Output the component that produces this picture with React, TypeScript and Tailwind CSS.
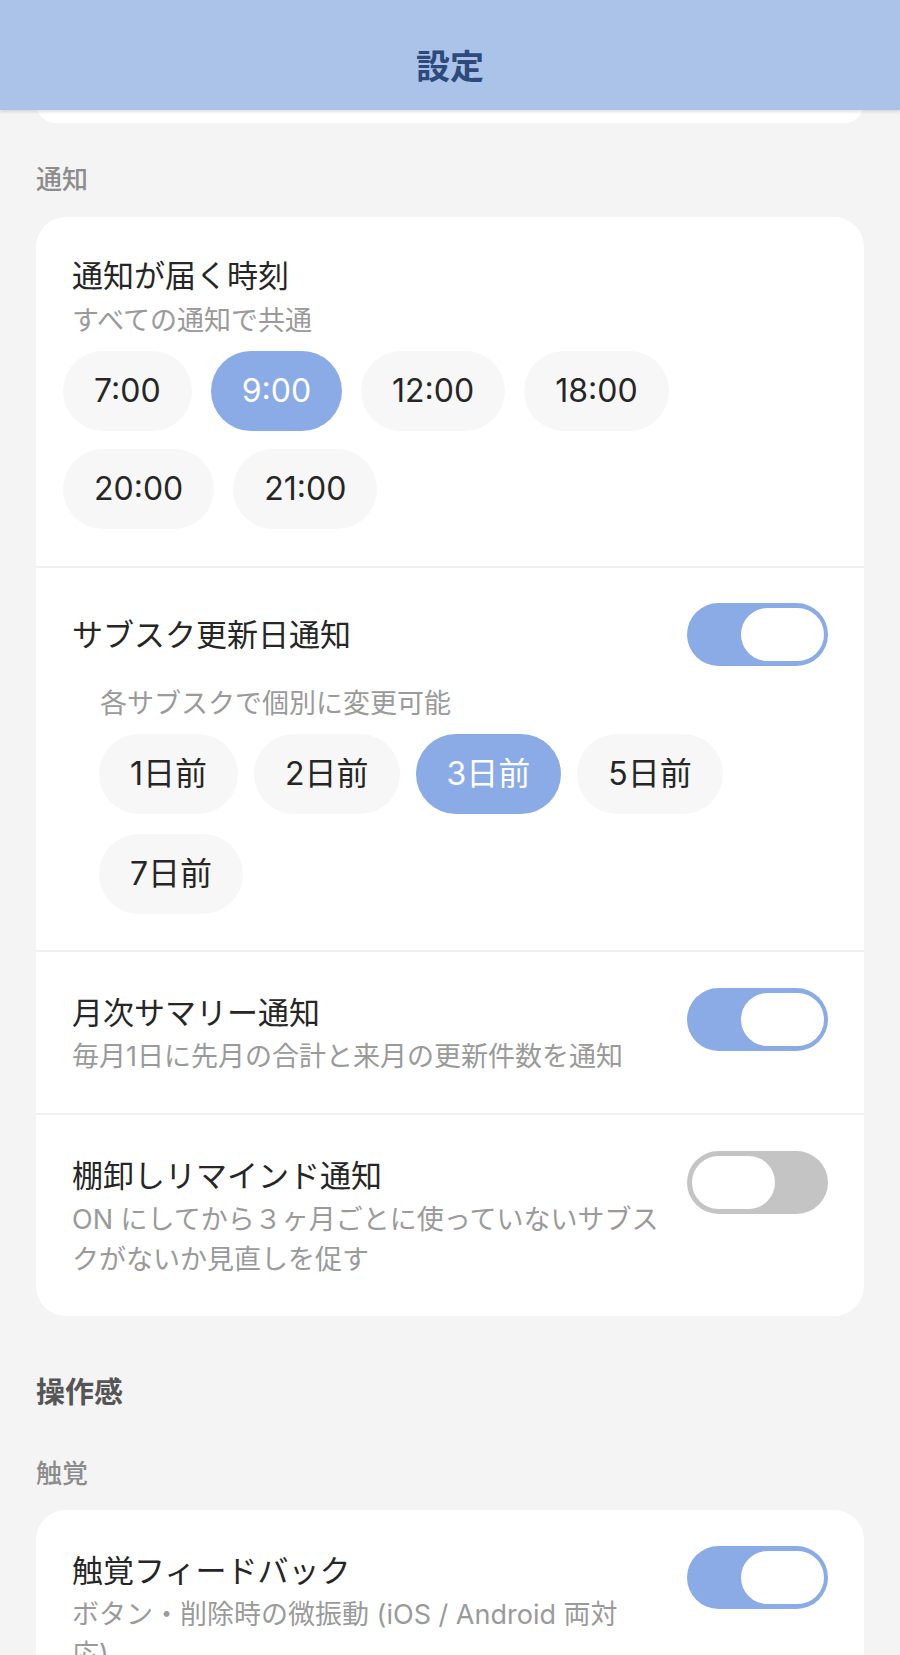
import React from "react";

const FONT = "font-['Inter','Noto_Sans_CJK_JP',sans-serif]";

function Chip({ label, active }: { label: string; active?: boolean }) {
  return (
    <div
      className={
        "h-[80px] px-[31px] rounded-full flex items-center text-[32px] leading-none " +
        (active ? "bg-[#8aabe6] text-white" : "bg-[#f7f7f7] text-[#262626]")
      }
    >
      {label}
    </div>
  );
}

function Toggle({ on }: { on: boolean }) {
  return (
    <div
      className={
        "w-[141px] h-[63px] shrink-0 rounded-full flex items-center py-[5px] " +
        (on ? "bg-[#8aabe6] justify-end pr-[4px]" : "bg-[#c4c4c4] justify-start pl-[5px]")
      }
    >
      <div className="w-[83px] h-[53px] rounded-full bg-white" />
    </div>
  );
}

function Title({ children }: { children: React.ReactNode }) {
  return <div className="text-[31px] leading-[46px] text-[#262626]">{children}</div>;
}

function Desc({ children, className = "" }: { children: React.ReactNode; className?: string }) {
  return <div className={"text-[27px] leading-[40px] text-[#9a9a9a] " + className}>{children}</div>;
}

function ToggleRow({
  title,
  desc,
  on,
  border = true,
  descClass = "",
}: {
  title: string;
  desc: string;
  on: boolean;
  border?: boolean;
  descClass?: string;
}) {
  return (
    <div className={"px-[36px] pt-[36px] pb-[36px] flex items-start gap-[24px] " + (border ? "border-t-2 border-[#f0f0f0]" : "")}>
      <div className="flex-1 pt-[2px]">
        <Title>{title}</Title>
        <Desc className={"mt-[1px] " + descClass}>{desc}</Desc>
      </div>
      <Toggle on={on} />
    </div>
  );
}

export default function App() {
  const times = ["7:00", "9:00", "12:00", "18:00", "20:00", "21:00"];
  const days = ["1日前", "2日前", "3日前", "5日前", "7日前"];
  return (
    <div className={"min-h-[1655px] w-[900px] bg-[#f4f4f4] overflow-hidden " + FONT}>
      <header className="relative z-10 h-[110px] bg-[#abc3e8] shadow-[0_2px_3px_rgba(0,0,0,0.12)] flex justify-center pt-[45px]">
        <div className="text-[34px] leading-[44px] font-bold text-[#2e4a7d]">設定</div>
      </header>

      <div className="h-[13px] overflow-hidden px-[36px] flex flex-col justify-end">
        <div className="h-[40px] shrink-0 bg-white rounded-[30px]" />
      </div>

      <div className="px-[36px]">
        <div className="mt-[38px] text-[26px] leading-[38px] font-medium text-[#8c8c8c]">通知</div>

        <div className="mt-[18px] bg-white rounded-[30px] overflow-hidden">
          {/* time row */}
          <div className="px-[36px] pt-[36px] pb-[37px]">
            <Title>通知が届く時刻</Title>
            <Desc className="mt-[2px]">すべての通知で共通</Desc>
            <div className="mt-[10px] ml-[-9px] flex flex-wrap gap-x-[19px] gap-y-[18px]">
              {times.map((t) => (
                <Chip key={t} label={t} active={t === "9:00"} />
              ))}
            </div>
          </div>

          {/* subscription renewal */}
          <div className="border-t-2 border-[#f0f0f0] px-[36px] pt-[35px] pb-[36px]">
            <div className="flex items-center justify-between">
              <Title>サブスク更新日通知</Title>
              <Toggle on={true} />
            </div>
            <div className="pl-[28px]">
              <Desc className="mt-[18px]">各サブスクで個別に変更可能</Desc>
              <div className="mt-[10px] ml-[-1px] flex flex-wrap gap-x-[16px] gap-y-[20px]">
                {days.map((d) => (
                  <Chip key={d} label={d} active={d === "3日前"} />
                ))}
              </div>
            </div>
          </div>

          <ToggleRow title="月次サマリー通知" desc="毎月1日に先月の合計と来月の更新件数を通知" on={true} />
          <ToggleRow
            title="棚卸しリマインド通知"
            desc="ON にしてから３ヶ月ごとに使っていないサブスクがないか見直しを促す"
            on={false}
          />
        </div>

        <div className="mt-[57px] text-[29px] leading-[40px] font-bold text-[#555555]">操作感</div>
        <div className="mt-[42px] text-[26px] leading-[38px] font-medium text-[#8c8c8c]">触覚</div>

        <div className="mt-[17px] bg-white rounded-[30px] overflow-hidden">
          <ToggleRow
            title="触覚フィードバック"
            desc="ボタン・削除時の微振動 (iOS / Android 両対応)"
            on={true}
            border={false}
            descClass="max-w-[568px]"
          />
        </div>
      </div>
    </div>
  );
}
